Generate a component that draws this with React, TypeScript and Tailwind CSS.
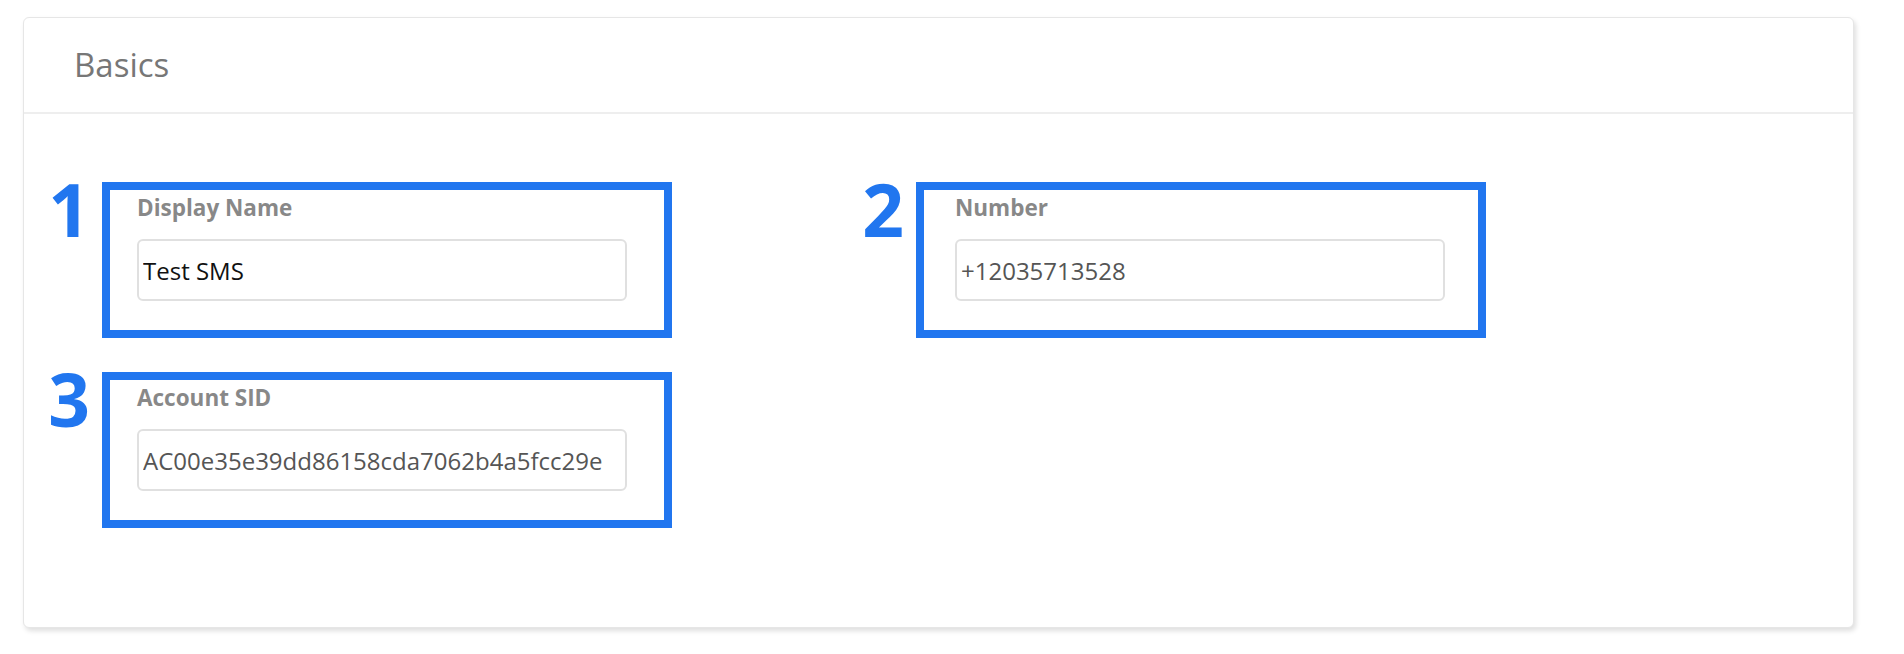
import React from "react";

const fields = [
  { n: "1", label: "Display Name", value: "Test SMS", dark: true, pad: "pl-[27px]" },
  { n: "2", label: "Number", value: "+12035713528", dark: false, pad: "pl-[31px]" },
  { n: "3", label: "Account SID", value: "AC00e35e39dd86158cda7062b4a5fcc29e", dark: false, pad: "pl-[27px]" },
];

function Field({ n, label, value, dark, pad }: (typeof fields)[number]) {
  return (
    <div className="flex items-start">
      <span className="w-[60px] mr-[12px] -mt-[10px] text-right text-[73px] leading-none font-bold text-[#2176ef]">
        {n}
      </span>
      <div className={`w-[570px] h-[156px] border-[8px] border-[#2176ef] pt-[7px] ${pad}`}>
        <label className="block text-[22.5px] leading-[22px] font-bold text-[#888888]">{label}</label>
        <input
          readOnly
          defaultValue={value}
          className={`mt-[20px] w-[490px] h-[62px] px-[4px] border-2 border-[#e0e0e0] rounded-[6px] bg-white text-[24px] outline-none ${
            dark ? "text-[#111111] font-medium" : "text-[#555555]"
          }`}
        />
      </div>
    </div>
  );
}

export default function App() {
  return (
    <div className="w-[1904px] h-[654px] bg-white pt-[17px] pl-[23px] font-['Open_Sans',sans-serif]">
      <div className="w-[1831px] h-[611px] border border-[#e6e6e6] rounded-[6px] bg-white shadow-[2px_3px_5px_rgba(0,0,0,0.13)]">
        <div className="h-[96px] border-b-2 border-[#eeeeee] pl-[50px] flex items-center">
          <h2 className="text-[33px] font-medium text-[#777777]">Basics</h2>
        </div>
        <div className="pt-[68px] pl-[6px] grid grid-cols-[814px_814px] gap-y-[34px]">
          {fields.map((f) => (
            <Field key={f.n} {...f} />
          ))}
        </div>
      </div>
    </div>
  );
}
